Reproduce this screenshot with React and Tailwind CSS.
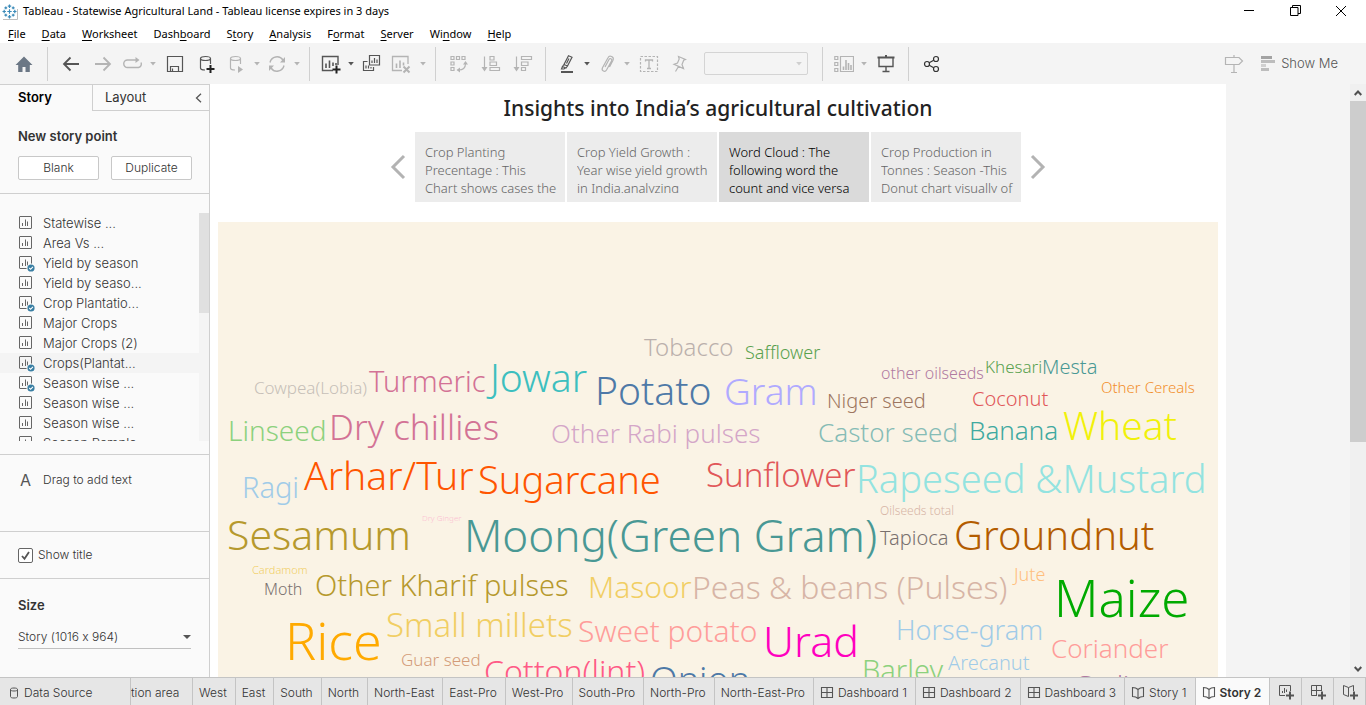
import React from "react";

/* ---------- icons ---------- */

function Icon({ children, size = 20, className = "" }) {
  return (
    <svg
      width={size}
      height={size}
      viewBox={`0 0 ${size} ${size}`}
      fill="none"
      stroke="currentColor"
      strokeWidth="1.2"
      className={`shrink-0 ${className}`}
      aria-hidden="true"
    >
      {children}
    </svg>
  );
}

function LogoIcon() {
  const plus = (x, y, r) => `M${x - r} ${y}h${2 * r}M${x} ${y - r}v${2 * r}`;
  return (
    <svg width="16" height="16" viewBox="0 0 16 16" fill="none" className="mx-0.5 shrink-0" aria-hidden="true">
      <path d="M15.5 5V15.5H1" stroke="#bdbdbd" />
      <g stroke="#3b8ab8" strokeWidth="1.2">
        <path d={plus(7.5, 7.5, 2.2)} />
        <path d={plus(7.5, 2.2, 1.7)} />
        <path d={plus(7.5, 12.8, 1.7)} />
        <path d={plus(2.2, 7.5, 1.7)} />
        <path d={plus(12.8, 7.5, 1.7)} />
        <path d={plus(3.8, 3.8, 1.4)} />
        <path d={plus(11.2, 3.8, 1.4)} />
        <path d={plus(3.8, 11.2, 1.4)} />
        <path d={plus(11.2, 11.2, 1.4)} />
      </g>
    </svg>
  );
}

const HomeIcon = () => (
  <Icon>
    <path d="M10 2.5 1.5 11h2.7v7h4.3v-5h3v5h4.3v-7h2.7Z" fill="#6b7785" stroke="none" />
  </Icon>
);
const BackIcon = () => (
  <Icon>
    <path d="M18 10H3M9.500 3.500 3 10l6.500 6.500" strokeWidth="1.8" />
  </Icon>
);
const ForwardIcon = () => (
  <Icon>
    <path d="M2 10h15M10.500 3.500 17 10l-6.500 6.500" strokeWidth="1.8" />
  </Icon>
);
const RedoIcon = () => (
  <Icon>
    <path d="M13 6H4.500a3.500 3.500 0 0 0 0 7.500h11a3.500 3.500 0 0 0 2.500-5" strokeWidth="1.4" />
    <path d="M12.500 3v6l4-3Z" fill="currentColor" stroke="none" />
  </Icon>
);
const SaveIcon = () => (
  <Icon>
    <path d="M2.500 2.500h15v15h-15ZM5.500 17.500v-5h8v5M7.500 14.500v3" />
  </Icon>
);
const Cylinder = () => (
  <path d="M3.500 4.500c0-1.300 2.200-2 5-2s5 .7 5 2-2.200 2-5 2-5-.7-5-2Zm0 0v9.500c0 1.500 2 2 4.500 2M13.500 4.500V10" />
);
const AddDataIcon = () => (
  <Icon>
    <Cylinder />
    <path d="M13.500 11v8M9.500 15h8" strokeWidth="2" className="text-[#222]" />
  </Icon>
);
const RunDataIcon = () => (
  <Icon>
    <Cylinder />
    <path d="M11 12v7l5-3.500Z" fill="currentColor" stroke="none" />
  </Icon>
);
const RefreshIcon = () => (
  <Icon>
    <path d="M3 8.500a7.200 7.200 0 0 1 13-2.500M17 11.500a7.200 7.200 0 0 1-13 2.500" strokeWidth="1.400" />
    <path d="M18 3v5.500h-5ZM2 17v-5.500h5Z" fill="currentColor" stroke="none" />
  </Icon>
);
const NewSheetIcon = () => (
  <Icon>
    <path d="M12 16.500H1.500v-14h15.500V11" strokeWidth="1.400" />
    <path d="M5 9.500V14M8.500 6.500V14M12 8.500v3.500M15 9v2" strokeWidth="1.600" />
    <path d="M15.500 11.500v8M11.500 15.500h8" strokeWidth="2" className="text-[#222]" />
  </Icon>
);
const DuplicateSheetIcon = () => (
  <Icon>
    <path d="M8.500 1.500h10v9.500h-10ZM6.500 7.500h-4v9h10v-3.500" />
    <path d="M11 9V6.500M13.500 9V4M16 9V5.500M5 14.500v-3M7.500 14.500v-3M10 14.500v-1.500" />
  </Icon>
);
const ClearSheetIcon = () => (
  <Icon>
    <path d="M11 16.500H1.500v-14H17V10" strokeWidth="1.300" />
    <path d="M5.500 9.500V14M9 6.500V14M12.500 8.500v3" strokeWidth="1.600" />
    <path d="m12.500 12.500 6 6M18.500 12.500l-6 6" strokeWidth="2" />
  </Icon>
);
const SwapIcon = () => (
  <Icon>
    <path d="M2 2.500h3v3H2ZM7.500 2.500h3v3h-3ZM13 2.500h3v3h-3ZM2 8h3v3H2ZM2 13.500h3v3H2Z" />
    <path d="M16.500 9.500c0 4-2.500 6.500-7 6.500" />
    <path d="M16.500 7 14 10.500h5ZM7.500 16l3.500-2.500v5Z" fill="currentColor" stroke="none" />
  </Icon>
);
const SortAscIcon = () => (
  <Icon>
    <path d="M3.500 2.500V14M9 2.500h4v3.500H9ZM9 8h6.500v3.500H9ZM9 13.500h9.500v3H9Z" />
    <path d="M.5 13h6l-3 4.500Z" fill="currentColor" stroke="none" />
  </Icon>
);
const SortDescIcon = () => (
  <Icon>
    <path d="M3.500 2.500V14M8.500 2.500h10v3h-10ZM8.500 8H15v3.500H8.500ZM8.500 13.500h4v3h-4Z" />
    <path d="M.5 13h6l-3 4.500Z" fill="currentColor" stroke="none" />
  </Icon>
);
const HighlightIcon = () => (
  <Icon>
    <path d="M11.500 1.800 15 3.200 10.500 12l-3.500-1.500ZM7 10.500l-1.500 2 3.500 1.500 1.500-2M5.500 12.500l-1 2.500 2.500 0 1.500-1.200M12 4.500 9.500 9.500" strokeWidth="1.200" />
    <path d="M4 18h12" strokeWidth="2" />
  </Icon>
);
const ClipIcon = () => (
  <Icon>
    <path d="m8 13 4-7.500c1-1.800 3.500-.5 2.500 1.500l-5 9c-1.500 2.500-5.500.8-4-2.300l5.500-10c1.500-3 6.500-1 5 2.500L12.500 13" />
  </Icon>
);
const TextIcon = () => (
  <Icon>
    <rect x="1.500" y="2.500" width="17" height="15" strokeDasharray="2.500 1.500" />
    <path d="M6.500 7.500V6h7v1.500M10 6v8.500M8 14.500h4" strokeWidth="1.300" />
  </Icon>
);
const PinIcon = () => (
  <Icon>
    <path d="m9.500 2.500 7 3-1.800.8-1.700 4.200 1.500 4-9.500-4.200 3.500-1.300 1.700-4ZM9.500 12.500 6.500 17.500" />
  </Icon>
);
const CardsIcon = () => (
  <Icon>
    <path d="M.8 2.500h3v3h-3ZM.8 8.500h3v3h-3ZM.8 14.500h3v3h-3ZM6.500 2.500h13v15h-13Z" />
    <path d="M9.500 16v-3.500M12 16V6M14.500 16V9M17 16v-5" strokeWidth="1.600" />
  </Icon>
);
const PresentIcon = () => (
  <Icon>
    <path d="M1.500 3.500h17M10 1v2" strokeWidth="2" />
    <path d="M3 4v8.500h14V4M10 12.500v5M6.500 17.500h7" strokeWidth="1.400" />
  </Icon>
);
const ShareIcon = () => (
  <Icon>
    <circle cx="5" cy="10" r="2.500" />
    <circle cx="14" cy="5" r="2.500" />
    <circle cx="14" cy="15" r="2.500" />
    <path d="m7.200 8.700 4.500-2.500M7.200 11.300l4.500 2.500" />
  </Icon>
);
const SignIcon = () => (
  <Icon>
    <path d="M1.500 3.500h13.500l3.500 3.500-3.500 3.500H1.500ZM10 1v2.500M10 10.500v7.500M7 18.500h6" />
  </Icon>
);
const ShowMeIcon = () => (
  <svg width="16" height="16" viewBox="0 0 16 16" className="shrink-0" shapeRendering="crispEdges" aria-hidden="true">
    <path d="M1 0h11v3H1Z" fill="#a3a3a3" />
    <path d="M1 4h14v3H1ZM1 12h8v3H1Z" fill="#bdbdbd" />
    <path d="M1 8h5v3H1Z" fill="#d0d0d0" />
  </svg>
);
const CaretIcon = () => (
  <svg width="6" height="4" viewBox="0 0 6 4" className="shrink-0" aria-hidden="true">
    <path d="M.2 0h5.600L3 3.500Z" fill="currentColor" />
  </svg>
);

function SheetIcon({ used }) {
  return (
    <svg width="17" height="17" viewBox="0 0 17 17" fill="none" stroke="#666" className="shrink-0" aria-hidden="true">
      <rect x="1.500" y="1.500" width="12" height="12" rx="0.500" />
      <path d="M4.500 8v3M7.500 4.500V11M9.500 6.500V11" />
      {used && (
        <g stroke="none">
          <circle cx="13" cy="13" r="4.500" fill="#fafafa" />
          <circle cx="13" cy="13" r="3.600" fill="#3a7fa3" />
          <path d="m11.300 13 1.300 1.300 2.300-2.500" stroke="#fff" strokeWidth="1.100" />
        </g>
      )}
    </svg>
  );
}

const DatabaseIcon = () => (
  <Icon size={12} className="text-[#555]">
    <path d="M2.500 2.500c0-1 1.300-1.500 3.500-1.500s3.500.5 3.500 1.500S8.200 4 6 4 2.500 3.500 2.500 2.500Zm0 0v7c0 1 1.300 1.500 3.500 1.500s3.500-.5 3.500-1.500v-7" strokeWidth="1" />
  </Icon>
);
const DashboardIcon = () => (
  <Icon size={14} className="text-[#555]">
    <path d="M1.500 1.500h11v10h-11ZM7 1.500v10M1.500 6.500h11" strokeWidth="1.100" />
  </Icon>
);
const StoryIcon = () => (
  <Icon size={14} className="text-[#555]">
    <path d="M7 3.500C5.500 2 3.500 1.500 1.500 1.500v9c2 0 4 .5 5.500 2 1.500-1.500 3.500-2 5.500-2v-9c-2 0-4 .5-5.500 2Zm0 0v9" strokeWidth="1.100" />
  </Icon>
);
const Plus = () => <path d="M12 7.500v8M8 11.500h8" strokeWidth="2" />;
const AddSheetIcon = () => (
  <Icon size={16} className="text-[#555]">
    <path d="M7 11.500H1.500v-10h11V7M4.500 9V7M6.500 9V4M8.500 8V5.500" strokeWidth="1" />
    <Plus />
  </Icon>
);
const AddDashboardIcon = () => (
  <Icon size={16} className="text-[#555]">
    <path d="M7 11.500H1.500v-10h10V7M6.500 1.500v10M1.500 6.500h10" strokeWidth="1" />
    <Plus />
  </Icon>
);
const AddStoryIcon = () => (
  <Icon size={16} className="text-[#555]">
    <path d="M6.500 3.500 1.500 1.500v9l5 2ZM6.500 3.500l5-2V7" strokeWidth="1" />
    <Plus />
  </Icon>
);

/* ---------- title bar and menu ---------- */

function TitleBar() {
  const control = "flex w-[46px] items-center justify-center";
  return (
    <header className="flex h-[23px] shrink-0 items-stretch justify-between bg-white">
      <div className="flex items-center gap-[3px]">
        <LogoIcon />
        <h1 className="font-['Noto_Sans',sans-serif] text-[11px] text-black">
          Tableau - Statewise Agricultural Land - Tableau license expires in 3 days
        </h1>
      </div>
      <div className="flex pr-0.5 pb-0.5 text-black">
        <button aria-label="Minimize" className={control}>
          <svg width="10" height="10" viewBox="0 0 10 10" stroke="currentColor"><path d="M0 4.500h10" /></svg>
        </button>
        <button aria-label="Restore" className={control}>
          <svg width="11" height="11" viewBox="0 0 11 11" stroke="currentColor" fill="none">
            <path d="M.5 2.500h7.500v8H.5ZM2.500 2.500v-2h8v8H8" />
          </svg>
        </button>
        <button aria-label="Close" className={control}>
          <svg width="10" height="10" viewBox="0 0 10 10" stroke="currentColor"><path d="m0 0 10 10M10 0 0 10" /></svg>
        </button>
      </div>
    </header>
  );
}

const menus = [
  ["", "F", "ile"],
  ["", "D", "ata"],
  ["", "W", "orksheet"],
  ["Dash", "b", "oard"],
  ["S", "t", "ory"],
  ["", "A", "nalysis"],
  ["F", "o", "rmat"],
  ["", "S", "erver"],
  ["Wi", "n", "dow"],
  ["", "H", "elp"],
];

function MenuBar() {
  return (
    <nav className="flex h-5 shrink-0 items-center gap-4 bg-white px-2 pt-0.5 font-['Noto_Sans',sans-serif] text-[11px] text-black">
      {menus.map(([a, b, c]) => (
        <button key={a + b + c}>
          {a}
          <span className="underline underline-offset-2">{b}</span>
          {c}
        </button>
      ))}
    </nav>
  );
}

/* ---------- toolbar ---------- */

const on = "text-[#555]";
const off = "text-[#b4b4b4]";

function Tool({ label, icon, tone = on, width = "w-8" }) {
  return (
    <button aria-label={label} className={`flex h-8 items-center justify-center ${width} ${tone}`}>
      {icon}
    </button>
  );
}

function Caret({ label, tone = on }) {
  return (
    <button aria-label={label} className={`flex h-8 w-3 items-center justify-center ${tone}`}>
      <CaretIcon />
    </button>
  );
}

const Separator = () => <div className="mr-[7px] ml-1.5 h-[34px] w-px bg-[#d0d0d0]" />;

function Toolbar() {
  return (
    <div className="flex h-[41px] shrink-0 items-center bg-[#f4f4f4]">
      <Tool label="Home" icon={<HomeIcon />} width="w-[41px] pl-1.5" />
      <Separator />
      <Tool label="Undo" icon={<BackIcon />} />
      <Tool label="Redo" icon={<ForwardIcon />} tone={off} />
      <Tool label="Replay" icon={<RedoIcon />} tone={off} width="w-7" />
      <Caret label="Replay options" tone={off} />
      <Tool label="Save" icon={<SaveIcon />} />
      <Tool label="New data source" icon={<AddDataIcon />} />
      <Tool label="Pause auto updates" icon={<RunDataIcon />} tone={off} width="w-7" />
      <Caret label="Auto update options" tone={off} />
      <Tool label="Run update" icon={<RefreshIcon />} tone={off} width="w-7" />
      <Caret label="Run update options" tone={off} />
      <Separator />
      <Tool label="New worksheet" icon={<NewSheetIcon />} width="w-7" />
      <Caret label="New worksheet options" />
      <Tool label="Duplicate" icon={<DuplicateSheetIcon />} width="w-7" />
      <Tool label="Clear sheet" icon={<ClearSheetIcon />} tone={off} />
      <Caret label="Clear options" tone={off} />
      <Separator />
      <Tool label="Swap rows and columns" icon={<SwapIcon />} tone={off} />
      <Tool label="Sort ascending" icon={<SortAscIcon />} tone={off} />
      <Tool label="Sort descending" icon={<SortDescIcon />} tone={off} />
      <Separator />
      <Tool label="Highlight" icon={<HighlightIcon />} width="w-7" />
      <Caret label="Highlight options" />
      <Tool label="Group members" icon={<ClipIcon />} tone={off} width="w-7" />
      <Caret label="Group options" tone={off} />
      <Tool label="Show mark labels" icon={<TextIcon />} tone={off} />
      <Tool label="Fix axes" icon={<PinIcon />} tone={off} width="w-7" />
      <div className="relative mr-2 ml-[11px] flex items-center">
        <select
          aria-label="Fit"
          disabled
          className="h-[23px] w-[104px] appearance-none rounded-xs border border-[#d4d4d4] bg-[#f4f4f4]"
        />
        <span className="pointer-events-none absolute right-1.5 text-[#cfcfcf]">
          <CaretIcon />
        </span>
      </div>
      <Separator />
      <Tool label="Show or hide cards" icon={<CardsIcon />} tone={off} width="w-7" />
      <Caret label="Card options" tone={off} />
      <Tool label="Presentation mode" icon={<PresentIcon />} />
      <Separator />
      <Tool label="Share workbook" icon={<ShareIcon />} tone="text-[#333]" />
      <div className="ml-auto flex items-center pr-7">
        <Tool label="Guide" icon={<SignIcon />} tone={off} />
        <button className="ml-2.5 flex items-center gap-[5px] font-['Inter',sans-serif] text-[13px] font-light text-[#555]">
          <ShowMeIcon />
          Show Me
        </button>
      </div>
    </div>
  );
}

/* ---------- story side pane ---------- */

const sheets = [
  ["Statewise ...", false],
  ["Area Vs ...", false],
  ["Yield by season", true],
  ["Yield by seaso...", false],
  ["Crop Plantatio...", true],
  ["Major Crops", false],
  ["Major Crops (2)", false],
  ["Crops(Plantat...", true],
  ["Season wise ...", true],
  ["Season wise ...", false],
  ["Season wise ...", false],
  ["Season Rample", false],
];

function Sidebar() {
  const button = "h-6 w-[81px] rounded-xs border border-[#c8c8c8] bg-white text-xs font-light text-[#333]";
  return (
    <aside className="flex w-[210px] shrink-0 flex-col border-t border-r border-[#cfcfcf] bg-[#fafafa] font-['Inter',sans-serif] text-[#333] [font-feature-settings:'calt'_0]">
      <div className="flex h-[26px] shrink-0 text-[13px]">
        <button className="w-[92px] pl-[18px] text-left font-semibold text-black">Story</button>
        <button className="flex flex-1 items-center justify-between border-b border-l border-[#cfcfcf] pr-[7px] pl-3">
          Layout
          <svg width="7" height="10" viewBox="0 0 7 10" fill="none" stroke="#555" strokeWidth="1.300" aria-hidden="true">
            <path d="M6 .8 1.500 5 6 9.200" />
          </svg>
        </button>
      </div>
      <section className="flex h-[83px] shrink-0 flex-col gap-2.5 border-b border-[#cfcfcf] pt-[15px] pl-[18px]">
        <h2 className="text-[13px] leading-5 font-semibold">New story point</h2>
        <div className="flex gap-3">
          <button className={button}>Blank</button>
          <button className={button}>Duplicate</button>
        </div>
      </section>
      <section className="flex h-[261px] shrink-0 border-b border-[#cfcfcf] pt-[19px] pb-[13px]">
        <ul className="flex-1 overflow-hidden text-[13px] leading-5 font-light">
          {sheets.map(([name, used], i) => (
            <li key={i} className={`flex h-5 items-center gap-2 pl-[18px] ${i === 7 ? "bg-[#f4f4f4]" : ""}`}>
              <SheetIcon used={used} />
              {name}
            </li>
          ))}
        </ul>
        <div className="w-2.5 bg-[#f4f4f4]">
          <div className="h-[100px] bg-[#e0e0e0]" />
        </div>
      </section>
      <section className="flex h-[77px] shrink-0 items-start border-b border-[#cfcfcf] pt-4 pl-5">
        <span className="w-[23px] text-base leading-[18px] text-[#555]">A</span>
        <span className="text-xs leading-[18px] font-light">Drag to add text</span>
      </section>
      <label className="flex h-[47px] shrink-0 items-center gap-[5px] border-b border-[#cfcfcf] pl-[18px] text-xs font-light">
        <span className="relative flex size-[15px]">
          <input type="checkbox" defaultChecked className="size-[15px] appearance-none rounded-xs border border-[#666] bg-white" />
          <svg width="15" height="15" viewBox="0 0 15 15" fill="none" stroke="#555" strokeWidth="1.800" className="pointer-events-none absolute inset-0" aria-hidden="true">
            <path d="m4 8 2.500 2.800L11 4" />
          </svg>
        </span>
        Show title
      </label>
      <section className="flex flex-col gap-2.5 pt-4 pr-[18px] pl-[18px]">
        <label htmlFor="size" className="text-[13px] leading-5 font-semibold">Size</label>
        <div className="relative flex items-center">
          <select
            id="size"
            className="h-6 w-full appearance-none border-b border-[#c0c0c0] bg-transparent text-xs font-light"
          >
            <option>Story (1016 x 964)</option>
          </select>
          <span className="pointer-events-none absolute right-0 text-[#555]">
            <svg width="8" height="4" viewBox="0 0 8 4" aria-hidden="true"><path d="M0 0h8L4 4Z" fill="currentColor" /></svg>
          </span>
        </div>
      </section>
    </aside>
  );
}

/* ---------- word cloud ---------- */

// [word, left, baseline, size, colour]; left and baseline are measured from the sheet's corner
const words = [
  ["Tobacco", 427, 134, 24, "#bab0ac"],
  ["Safflower", 528, 137, 18, "#59a14f"],
  ["Turmeric", 152, 169, 29, "#d37295"],
  ["Jowar", 273, 169, 39, "#3dbfbf"],
  ["Cowpea(Lobia)", 37, 172, 17, "#c6bfb8"],
  ["Potato", 378, 182, 39, "#4e79a7"],
  ["Gram", 507, 182, 37, "#b0aaff"],
  ["Niger seed", 610, 186, 20, "#9d7660"],
  ["other oilseeds", 663, 157, 16, "#b07aa1"],
  ["Khesari", 768, 151, 17, "#59a14f"],
  ["Mesta", 825, 152, 20, "#499894"],
  ["Other Cereals", 883, 171, 15, "#f28e2b"],
  ["Coconut", 755, 184, 20, "#e15759"],
  ["Linseed", 11, 218, 28, "#8cd17d"],
  ["Dry chillies", 112, 217, 35, "#d37295"],
  ["Other Rabi pulses", 334, 221, 26, "#d4a6c8"],
  ["Castor seed", 601, 220, 26, "#86bcb6"],
  ["Banana", 752, 218, 26, "#3fa9a0"],
  ["Wheat", 846, 217, 39, "#f1f10a"],
  ["Ragi", 25, 275, 29, "#a0cbe8"],
  ["Arhar/Tur", 87, 267, 39, "#ff5500"],
  ["Sugarcane", 261, 271, 38, "#ff5500"],
  ["Sunflower", 489, 265, 33, "#e15759"],
  ["Rapeseed &Mustard", 639, 270, 38, "#93e3e0"],
  ["Sesamum", 10, 328, 41, "#b6992d"],
  ["Dry Ginger", 204, 299, 8, "#fabfd2"],
  ["Moong(Green Gram)", 247, 329, 44, "#499894"],
  ["Oilseeds total", 662, 293, 12, "#d7b5a6"],
  ["Tapioca", 663, 323, 20, "#79706e"],
  ["Groundnut", 737, 328, 40, "#b35c00"],
  ["Cardamom", 34, 352, 11, "#f1ce63"],
  ["Moth", 46, 373, 16, "#79706e"],
  ["Other Kharif pulses", 98, 373, 29, "#b6992d"],
  ["Masoor", 371, 376, 30, "#f1ce63"],
  ["Peas & beans (Pulses)", 475, 377, 32, "#d7b5a6"],
  ["Jute", 797, 359, 18, "#ffbe7d"],
  ["Maize", 838, 394, 51, "#00aa00"],
  ["Small millets", 169, 415, 33, "#f1ce63"],
  ["Sweet potato", 361, 420, 30, "#ff9d9a"],
  ["Rice", 69, 437, 52, "#ffaa00"],
  ["Urad", 546, 434, 43, "#ff00bf"],
  ["Horse-gram", 679, 417, 27, "#a0cbe8"],
  ["Coriander", 834, 436, 26, "#ff9d9a"],
  ["Guar seed", 184, 444, 17, "#d39b78"],
  ["Arecanut", 731, 448, 20, "#a0cbe8"],
  ["Cotton(lint)", 267, 461, 32, "#ff5a86"],
  ["Onion", 433, 471, 36, "#4e79a7"],
  ["Barley", 645, 458, 29, "#8cd17d"],
  ["Garlic", 857, 472, 26, "#b07aa1"],
];

function WordCloud() {
  return (
    <div className="relative mx-2 flex-1 overflow-hidden bg-[#faf3e5] font-['Noto_Sans',sans-serif] font-light">
      {words.map(([word, x, baseline, size, color]) => (
        <span
          key={word}
          className="absolute leading-none whitespace-nowrap"
          style={{
            left: Math.round(x - size * 0.03),
            top: Math.round(baseline - size * 0.87),
            fontSize: size,
            color,
          }}
        >
          {word}
        </span>
      ))}
    </div>
  );
}

/* ---------- story ---------- */

const points = [
  "Crop Planting Precentage : This Chart shows cases the",
  "Crop Yield Growth : Year wise yield growth in India,analyzing",
  "Word Cloud : The following word the count and vice versa",
  "Crop Production in Tonnes : Season -This Donut chart visually of",
];

function StoryArrow({ label, d }) {
  return (
    <button aria-label={label} className="flex w-[34px] items-center justify-center">
      <svg width="16" height="26" viewBox="0 0 16 26" fill="none" stroke="#b3b3b3" strokeWidth="3" aria-hidden="true">
        <path d={d} />
      </svg>
    </button>
  );
}

function Story() {
  return (
    <div className="flex w-[1016px] shrink-0 flex-col bg-white font-['Noto_Sans',sans-serif]">
      <h2 className="pt-2.5 text-center text-[21px] leading-7 font-medium text-[#222]">
        Insights into India’s agricultural cultivation
      </h2>
      <div className="mt-2.5 mb-5 flex justify-center">
        <StoryArrow label="Previous story point" d="M14 2 3 13l11 11" />
        <div className="flex gap-0.5">
          {points.map((text, i) => (
            <button
              key={text}
              className={`h-[70px] w-[150px] pr-1 pl-2.5 text-left ${
                i === 2 ? "bg-[#dadada] text-black" : "bg-[#ececec] text-[#666]"
              }`}
            >
              <span className="mt-px block h-[50px] overflow-hidden text-[13px] leading-[18px] font-light">{text}</span>
            </button>
          ))}
        </div>
        <StoryArrow label="Next story point" d="m2 2 11 11L2 24" />
      </div>
      <WordCloud />
    </div>
  );
}

function Scrollbar() {
  const arrow = "flex h-[17px] shrink-0 items-center justify-center text-[#505050]";
  return (
    <div className="ml-auto flex w-4 shrink-0 flex-col bg-[#f0f0f0]">
      <button aria-label="Scroll up" className={arrow}>
        <svg width="8" height="6" viewBox="0 0 8 6" fill="none" stroke="currentColor" strokeWidth="2"><path d="m.7 5 3.300-3.500L7.300 5" /></svg>
      </button>
      <div className="flex-1">
        <div className="h-[61%] bg-[#cdcdcd]" />
      </div>
      <button aria-label="Scroll down" className={arrow}>
        <svg width="8" height="6" viewBox="0 0 8 6" fill="none" stroke="currentColor" strokeWidth="2"><path d="m.7 1 3.300 3.500L7.300 1" /></svg>
      </button>
    </div>
  );
}

/* ---------- sheet tabs ---------- */

const sheetTabs = ["West", "East", "South", "North", "North-East", "East-Pro", "West-Pro", "South-Pro", "North-Pro", "North-East-Pro"];

function SheetTabs() {
  const tab = "flex shrink-0 items-center gap-1 border-r border-[#c4c4c4] pt-0.5 pr-2 pl-1.5 whitespace-nowrap";
  const add = "flex flex-1 items-center justify-center border-r border-[#c4c4c4]";
  return (
    <footer className="flex h-7 shrink-0 border-t border-[#c4c4c4] bg-[#e6e6e6] font-['Inter',sans-serif] text-xs font-light text-[#333]">
      <button className="flex w-[131px] shrink-0 items-center gap-1 border-r border-[#c4c4c4] pt-0.5 pl-2">
        <DatabaseIcon />
        Data Source
      </button>
      <button className="flex w-[62px] shrink-0 items-center overflow-hidden border-r border-[#c4c4c4] pt-0.5 whitespace-nowrap">tion area</button>
      {sheetTabs.map((name) => (
        <button key={name} className={tab}>{name}</button>
      ))}
      {["Dashboard 1", "Dashboard 2", "Dashboard 3"].map((name) => (
        <button key={name} className={tab}>
          <DashboardIcon />
          {name}
        </button>
      ))}
      <button className={tab}>
        <StoryIcon />
        Story 1
      </button>
      <button className={`${tab} bg-[#fafafa] font-semibold`}>
        <StoryIcon />
        Story 2
      </button>
      <button aria-label="New worksheet" className={add}><AddSheetIcon /></button>
      <button aria-label="New dashboard" className={add}><AddDashboardIcon /></button>
      <button aria-label="New story" className={add}><AddStoryIcon /></button>
    </footer>
  );
}

export default function App() {
  return (
    <div className="flex h-screen flex-col overflow-hidden bg-white">
      <TitleBar />
      <MenuBar />
      <Toolbar />
      <div className="flex min-h-0 flex-1 bg-[#f4f4f4]">
        <Sidebar />
        <Story />
        <Scrollbar />
      </div>
      <SheetTabs />
    </div>
  );
}
